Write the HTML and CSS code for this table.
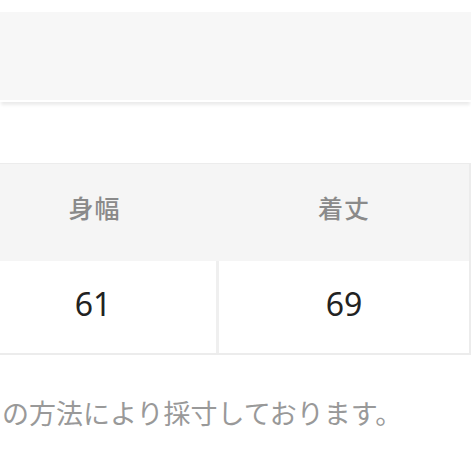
FILE: index.html
```html
<!DOCTYPE html>
<html lang="ja">
<head>
<meta charset="utf-8">
<link rel="stylesheet" href="styles.css">
</head>
<body>
<div class="band"></div>
<div class="table">
  <div class="row head">
    <div class="cell">身幅</div>
    <div class="cell">着丈</div>
  </div>
  <div class="row body">
    <div class="cell">61</div>
    <div class="cell">69</div>
  </div>
</div>
<p class="note">の方法により採寸しております。</p>
</body>
</html>
```
FILE: styles.css
```css
html, body {
  margin: 0;
  padding: 0;
  background: #fff;
  width: 471px;
  height: 471px;
  overflow: hidden;
  font-family: "Noto Sans CJK JP", "Noto Sans", sans-serif;
}
.band {
  margin-top: 12px;
  height: 88px;
  background: #f7f7f7;
  border-bottom: 2px solid #fff;
  box-shadow: 0 4px 3px -1px #ececec;
}
.table {
  margin-top: 61px;
  margin-left: -30px;
  width: 499px;
  border-top: 1px solid #ececec;
  border-bottom: 2px solid #ececec;
  border-right: 2px solid #ececec;
}
.row {
  display: grid;
  grid-template-columns: 249px 250px;
}
.head {
  height: 97px;
  background: #f5f5f5;
}
.head .cell {
  color: #8a8a8a;
  font-size: 25px;
  font-weight: 500;
  letter-spacing: 1px;
  padding-bottom: 12px;
}
.body {
  height: 92px;
  background: #fff;
}
.body .cell {
  color: #222;
  font-size: 32px;
  font-family: "Noto Sans", sans-serif;
  font-weight: 400;
  padding-bottom: 8px;
}
.body .cell:first-child {
  border-right: 3px solid #efefef;
}
.cell {
  display: flex;
  align-items: center;
  justify-content: center;
}
.note {
  margin: 38px 0 0 2px;
  font-size: 27px;
  color: #999;
  white-space: nowrap;
  letter-spacing: 0;
}
```
